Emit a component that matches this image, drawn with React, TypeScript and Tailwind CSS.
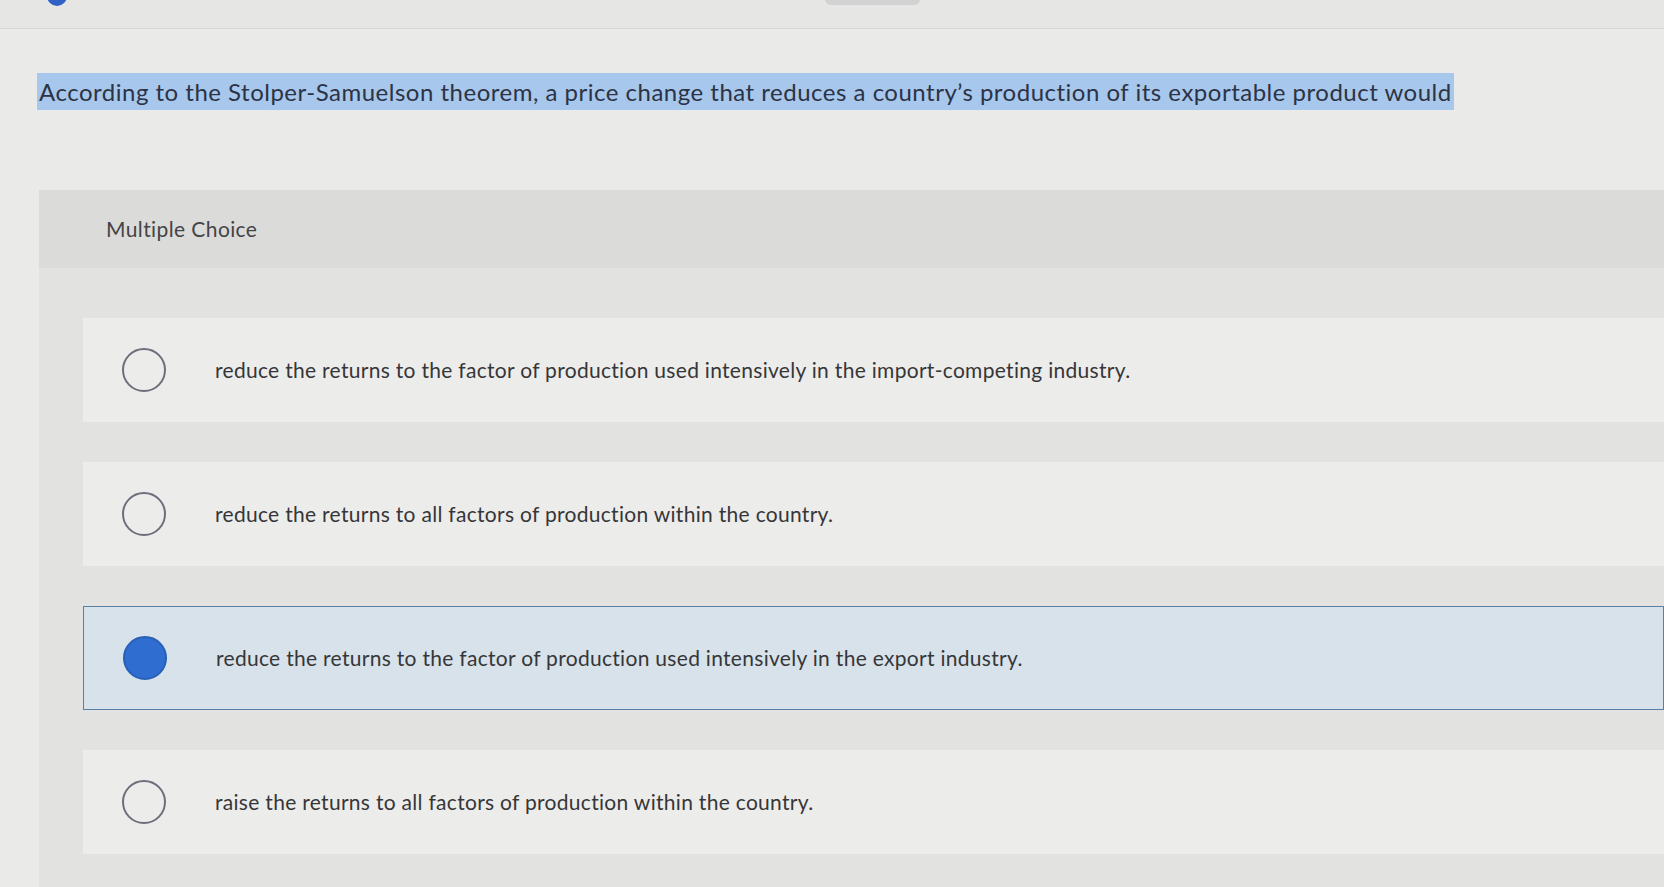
const options = [
  { id: "a", text: "reduce the returns to the factor of production used intensively in the import-competing industry.", selected: false },
  { id: "b", text: "reduce the returns to all factors of production within the country.", selected: false },
  { id: "c", text: "reduce the returns to the factor of production used intensively in the export industry.", selected: true },
  { id: "d", text: "raise the returns to all factors of production within the country.", selected: false },
];

const Radio = ({ checked }: { checked: boolean }) =>
  checked ? (
    <div className="size-[44px] shrink-0 rounded-full border-2 border-[#2a5fb6] bg-[#2f6dd0]" />
  ) : (
    <div className="size-[44px] shrink-0 rounded-full border-2 border-[#6e6d7c] bg-transparent" />
  );

export default function App() {
  return (
    <div className="h-[887px] w-full overflow-hidden bg-[#eaeae8] font-['Lato','Liberation_Sans',sans-serif] text-[#363638]">
      {/* top strip, cut off by the photo */}
      <div className="flex h-[29px] items-start border-b border-[#d7d7d5] bg-[#e6e6e4]">
        <div className="ml-[47px] -mt-[14px] size-[20px] rounded-full bg-[#2f62c4]" />
        <div className="ml-[758px] -mt-[10px] h-[15px] w-[95px] rounded-[6px] bg-[#d2d2d2]" />
      </div>

      <div className="pl-[37px] pt-[45px]">
        <span className="bg-[#a7c7ed] px-[2px] py-[4px] text-[24px] leading-[35px] tracking-[0.5px] text-[#2c3344]">
          According to the Stolper-Samuelson theorem, a price change that reduces a country’s production of its exportable product would
        </span>
      </div>

      <div className="ml-[39px] mt-[81px] bg-[#e2e2e1] pb-[40px]">
        <div className="flex h-[78px] items-center bg-[#dbdbda] pl-[67px] text-[21px] tracking-[0.4px] text-[#444446]">
          Multiple Choice
        </div>

        <div className="flex flex-col gap-[40px] pl-[44px] pt-[50px]">
          {options.map((o) => (
            <div
              key={o.id}
              className={
                o.selected
                  ? "flex h-[104px] items-center gap-[49px] border-[1.5px] border-[#5b7ea6] bg-[#d7e2ea] pl-[39px]"
                  : "flex h-[104px] items-center gap-[49px] bg-[#ececeb] pl-[39px]"
              }
            >
              <Radio checked={o.selected} />
              <span className="text-[21px] tracking-[0.3px]">{o.text}</span>
            </div>
          ))}
        </div>
      </div>
    </div>
  );
}
